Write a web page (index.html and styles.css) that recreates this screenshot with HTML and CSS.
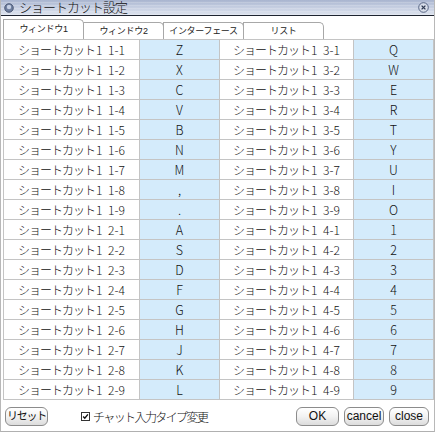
FILE: index.html
```html
<!DOCTYPE html>
<html lang="ja">
<head>
<meta charset="utf-8">
<link rel="stylesheet" href="styles.css">
</head>
<body>
<div class="window">
  <div class="titlebar">
    <svg class="ticon" width="10" height="10" viewBox="0 0 10 10"><circle cx="5" cy="5" r="4.3" fill="#6f7f9f" stroke="#3d4a66" stroke-width="0.8"/><circle cx="5" cy="4" r="2.2" fill="#c6d0e4"/></svg>
    <span class="title">ショートカット設定</span>
    <svg class="close" width="11" height="11" viewBox="0 0 11 11"><circle cx="5.5" cy="5.5" r="4.8" fill="#d8deea" stroke="#4a5878" stroke-width="0.9"/><path d="M3.6 3.6 L7.4 7.4 M7.4 3.6 L3.6 7.4" stroke="#2d3850" stroke-width="1.3"/></svg>
  </div>
  <div class="body">
    <div class="tabs">
      <div class="tab active">ウィンドウ1</div>
      <div class="tab">ウィンドウ2</div>
      <div class="tab">インターフェース</div>
      <div class="tab">リスト</div>
    </div>
    <table class="grid">
      <colgroup><col class="c1"><col class="c2"><col class="c3"><col class="c4"></colgroup>
      <tbody>
        <tr><td><span class="jp">ショートカット</span>1 1-1</td><td class="k">Z</td><td><span class="jp">ショートカット</span>1 3-1</td><td class="k">Q</td></tr>
        <tr><td><span class="jp">ショートカット</span>1 1-2</td><td class="k">X</td><td><span class="jp">ショートカット</span>1 3-2</td><td class="k">W</td></tr>
        <tr><td><span class="jp">ショートカット</span>1 1-3</td><td class="k">C</td><td><span class="jp">ショートカット</span>1 3-3</td><td class="k">E</td></tr>
        <tr><td><span class="jp">ショートカット</span>1 1-4</td><td class="k">V</td><td><span class="jp">ショートカット</span>1 3-4</td><td class="k">R</td></tr>
        <tr><td><span class="jp">ショートカット</span>1 1-5</td><td class="k">B</td><td><span class="jp">ショートカット</span>1 3-5</td><td class="k">T</td></tr>
        <tr><td><span class="jp">ショートカット</span>1 1-6</td><td class="k">N</td><td><span class="jp">ショートカット</span>1 3-6</td><td class="k">Y</td></tr>
        <tr><td><span class="jp">ショートカット</span>1 1-7</td><td class="k">M</td><td><span class="jp">ショートカット</span>1 3-7</td><td class="k">U</td></tr>
        <tr><td><span class="jp">ショートカット</span>1 1-8</td><td class="k">,</td><td><span class="jp">ショートカット</span>1 3-8</td><td class="k">I</td></tr>
        <tr><td><span class="jp">ショートカット</span>1 1-9</td><td class="k">.</td><td><span class="jp">ショートカット</span>1 3-9</td><td class="k">O</td></tr>
        <tr><td><span class="jp">ショートカット</span>1 2-1</td><td class="k">A</td><td><span class="jp">ショートカット</span>1 4-1</td><td class="k">1</td></tr>
        <tr><td><span class="jp">ショートカット</span>1 2-2</td><td class="k">S</td><td><span class="jp">ショートカット</span>1 4-2</td><td class="k">2</td></tr>
        <tr><td><span class="jp">ショートカット</span>1 2-3</td><td class="k">D</td><td><span class="jp">ショートカット</span>1 4-3</td><td class="k">3</td></tr>
        <tr><td><span class="jp">ショートカット</span>1 2-4</td><td class="k">F</td><td><span class="jp">ショートカット</span>1 4-4</td><td class="k">4</td></tr>
        <tr><td><span class="jp">ショートカット</span>1 2-5</td><td class="k">G</td><td><span class="jp">ショートカット</span>1 4-5</td><td class="k">5</td></tr>
        <tr><td><span class="jp">ショートカット</span>1 2-6</td><td class="k">H</td><td><span class="jp">ショートカット</span>1 4-6</td><td class="k">6</td></tr>
        <tr><td><span class="jp">ショートカット</span>1 2-7</td><td class="k">J</td><td><span class="jp">ショートカット</span>1 4-7</td><td class="k">7</td></tr>
        <tr><td><span class="jp">ショートカット</span>1 2-8</td><td class="k">K</td><td><span class="jp">ショートカット</span>1 4-8</td><td class="k">8</td></tr>
        <tr><td><span class="jp">ショートカット</span>1 2-9</td><td class="k">L</td><td><span class="jp">ショートカット</span>1 4-9</td><td class="k">9</td></tr>
      </tbody>
    </table>
    <div class="footer">
      <button class="btn reset">リセット</button>
      <label class="chk"><span class="box"><svg width="9" height="9" viewBox="0 0 9 9"><path d="M1.5 4.5 L3.6 6.8 L7.6 1.8" fill="none" stroke="#111" stroke-width="1.8"/></svg></span>チャット入力タイプ変更</label>
      <div class="spacer"></div>
      <button class="btn ok">OK</button>
      <button class="btn cancel">cancel</button>
      <button class="btn close-btn">close</button>
    </div>
  </div>
</div>
</body>
</html>
```

FILE: styles.css
```css
html, body {
  margin: 0;
  padding: 0;
  background: #ffffff;
}
body {
  width: 435px;
  height: 432px;
  overflow: hidden;
  font-family: "Liberation Sans", "Noto Sans CJK JP", sans-serif;
  font-weight: 300;
  color: #111;
}
.window {
  width: 435px;
  height: 432px;
  box-sizing: border-box;
  border-left: 1px solid #b8b8b8;
  border-right: 1px solid #b8b8b8;
  border-bottom: 1px solid #b0b0b0;
  display: flex;
  flex-direction: column;
  background: #fff;
}
.titlebar {
  height: 15px;
  border-bottom: 1px solid #1e2430;
  background: repeating-linear-gradient(180deg, rgba(255,255,255,0) 0px, rgba(255,255,255,0) 2px, rgba(255,255,255,0.18) 2px, rgba(255,255,255,0.18) 3px),
              linear-gradient(180deg, #a9b5cf 0%, #c3cce0 45%, #dde3ee 100%);
  display: flex;
  align-items: center;
  padding: 0 3px 0 3px;
}
.ticon {
  display: block;
  margin-right: 5px;
}
.title {
  font-size: 13px;
  line-height: 16px;
  height: 15px;
  color: #111;
  flex: 1;
  letter-spacing: -1px;
  white-space: nowrap;
}
.close {
  display: block;
  margin-right: 2px;
}
.body {
  flex: 1;
  display: flex;
  flex-direction: column;
  padding: 3px 2px 0 2px;
}
.tabs {
  display: flex;
  align-items: flex-end;
  height: 20px;
}
.tab {
  width: 81px;
  height: 17px;
  box-sizing: border-box;
  border: 1px solid #a8a8a8;
  border-bottom: none;
  border-radius: 0 5px 0 0;
  margin-right: -1px;
  font-size: 9px;
  font-weight: 400;
  line-height: 16px;
  text-align: center;
  color: #222;
  background: #fff;
  letter-spacing: -0.3px;
}
.tab.active {
  height: 20px;
  line-height: 18px;
  position: relative;
  z-index: 1;
}
.grid {
  border-collapse: collapse;
  width: 430px;
  table-layout: fixed;
  font-size: 12px;
  font-family: "Noto Sans CJK JP", "Liberation Sans", sans-serif;
  font-weight: 300;
}
.c1 { width: 136px; }
.c2 { width: 80px; }
.c3 { width: 134px; }
.c4 { width: 80px; }
.grid td {
  height: 19px;
  padding: 0;
  border: 1px solid #c4c4c4;
  text-align: center;
  line-height: 19px;
  white-space: nowrap;
  overflow: hidden;
  word-spacing: 3px;
  color: #111;
}
.grid .jp {
  letter-spacing: -1px;
  margin-right: 1px;
}
.grid td.k {
  background: #d4ebfb;
  font-size: 12.5px;
}
.footer {
  display: flex;
  align-items: center;
  height: 32px;
  padding: 0 3px 0 2px;
}
.btn {
  font-family: "Liberation Sans", "Noto Sans CJK JP", sans-serif;
  font-size: 12px;
  height: 19px;
  padding: 0 5px;
  border: 1px solid #8c8c8c;
  border-radius: 6px;
  background: linear-gradient(180deg, #ffffff 0%, #f2f2f2 50%, #dcdcdc 100%);
  color: #111;
  line-height: 16px;
  margin-left: 5px;
}
.btn.reset {
  margin-left: 0;
  width: 43px;
  padding: 0;
  font-size: 11px;
  letter-spacing: -1.2px;
}
.btn.ok {
  width: 43px;
}
.btn.cancel {
  width: 40px;
  padding: 0;
}
.btn.close-btn {
  width: 40px;
  padding: 0;
}
.chk {
  display: flex;
  align-items: center;
  font-size: 12px;
  margin-left: 33px;
  letter-spacing: -1.6px;
}
.box {
  width: 9px;
  height: 9px;
  box-sizing: border-box;
  border: 1px solid #333;
  background: #fff;
  margin-right: 3px;
  display: flex;
  align-items: center;
  justify-content: center;
}
.box svg { display: block; }
.spacer { flex: 1; }
```
